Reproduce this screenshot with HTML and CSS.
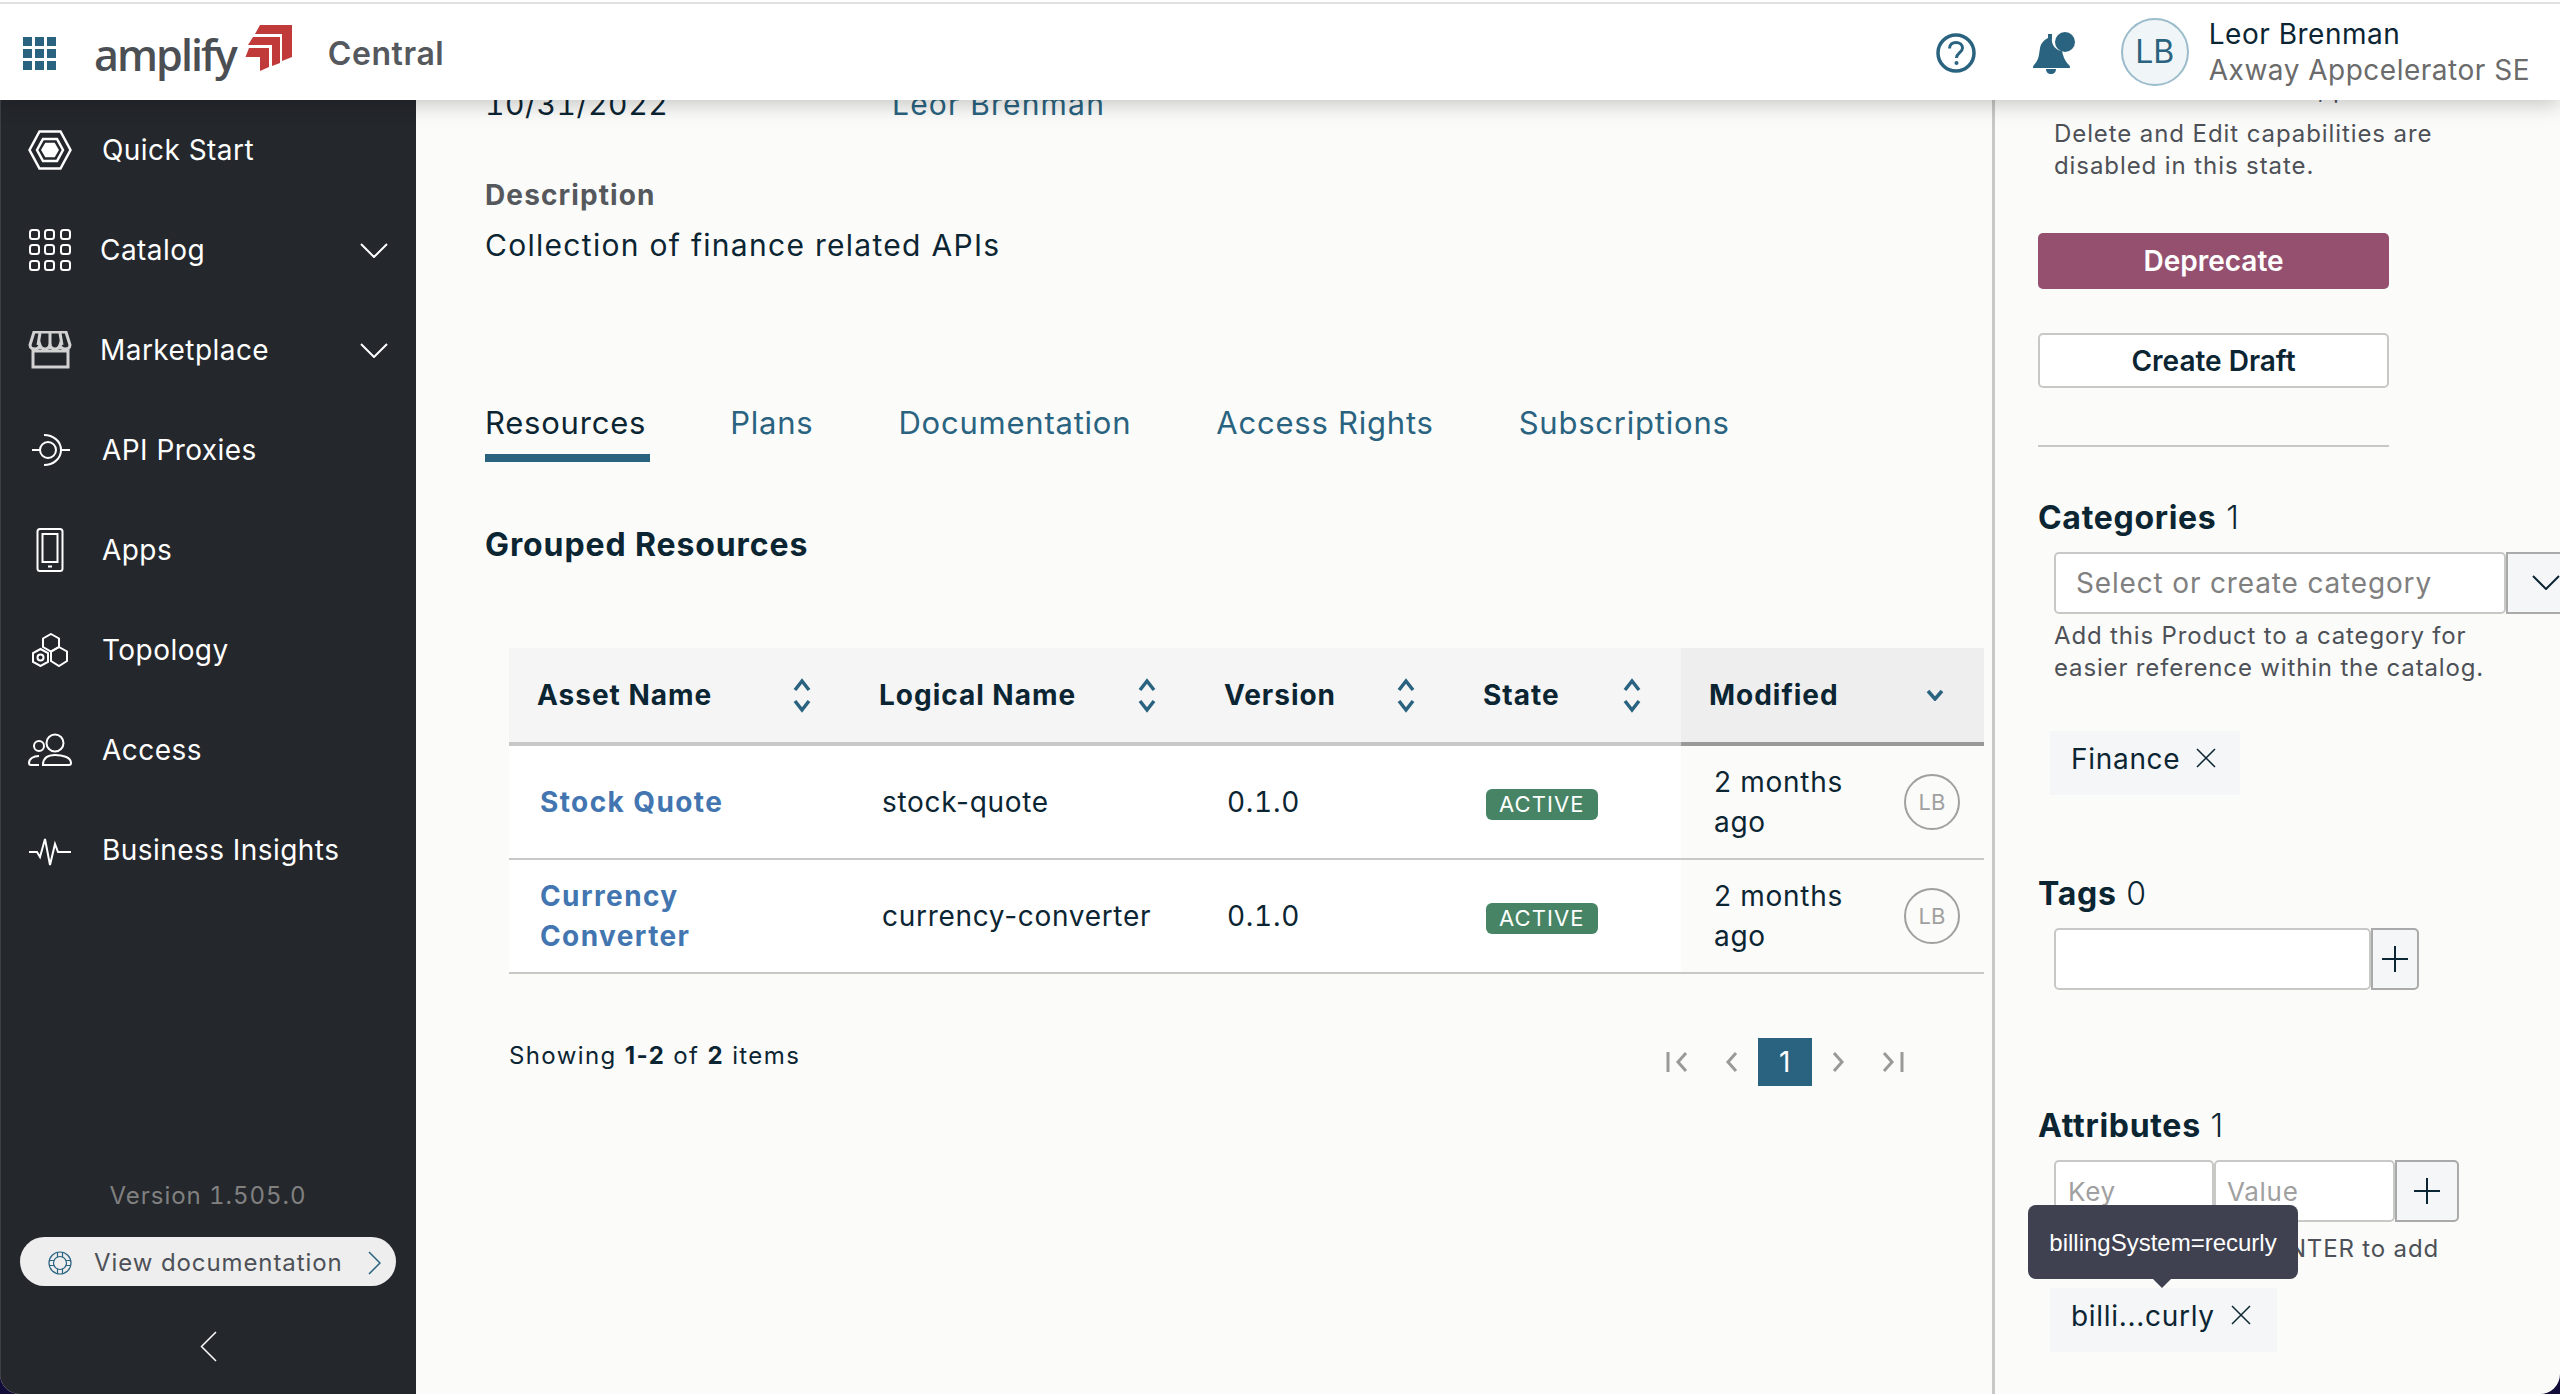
FILE: index.html
```html
<!DOCTYPE html>
<html lang="en">
<head>
    <meta charset="UTF-8">
    <title>Amplify Central - Product</title>
    <link rel="stylesheet" href="styles.css">
</head>
<body>
<div class="frame">
<div class="window">
    <header class="topbar">
        <svg class="apps-grid" viewBox="0 0 33 33"><rect width="9" height="9"/><rect x="12" width="9" height="9"/><rect x="24" width="9" height="9"/><rect y="12" width="9" height="9"/><rect x="12" y="12" width="9" height="9"/><rect x="24" y="12" width="9" height="9"/><rect y="24" width="9" height="9"/><rect x="12" y="24" width="9" height="9"/><rect x="24" y="24" width="9" height="9"/></svg>
        <span class="brand">amplify</span>
        <svg class="brand-mark" viewBox="15 9 48 47"><polygon points="30,9 62,9 62,41 52,45 52,18 25,18"/><polygon points="23,21 50,21 50,47 42,50 42,29 18,29"/><polygon points="19,32 39,32 39,51 30,55 30,41 15.5,41"/></svg>
        <span class="product">Central</span>
        <div class="topbar-right">
            <svg class="help-icon" viewBox="0 0 40 40"><circle cx="20" cy="20" r="18" fill="none" stroke="#2a6380" stroke-width="3.5"/><path d="M13.5 15.5c0-4 3-6 6.5-6s6.500 2.200 6.500 5.500c0 4.500-6 5-6 10" fill="none" stroke="#2a6380" stroke-width="3"/><circle cx="20.500" cy="30" r="2" fill="#2a6380"/></svg>
            <svg class="bell-icon" viewBox="0 0 44 42"><path d="M16 2h4v4c-1 6 3 12 10 13 1 4 2 9 7 14 1 1 1 2 1 3H1c0-1 0-2 1-3 5-5 5-11 6-17 1-5 4-8 8-10z" fill="#2a6380"/><path d="M14 37h10c0 3-2 5-5 5s-5-2-5-5z" fill="#2a6380"/><circle cx="33" cy="10" r="10" fill="#2a6380"/></svg>
            <div class="user-badge">LB</div>
            <div class="user-info">
                <div class="user-name">Leor Brenman</div>
                <div class="user-org">Axway Appcelerator SE</div>
            </div>
        </div>
    </header>

    <div class="layout">
        <nav class="sidebar">
            <a class="nav-item">
                <svg class="nav-icon icon-hex" viewBox="0 0 44 40"><polygon points="1.500,20 11.500,1.500 32.500,1.500 42.500,20 32.500,38.500 11.500,38.500"/><polygon points="9,20 15,9 29,9 35,20 29,31 15,31"/><polygon class="solid" points="14.500,20 18,14 26,14 29.500,20 26,26 18,26"/></svg>
                <span>Quick Start</span>
            </a>
            <a class="nav-item nav-item-sub">
                <svg class="nav-icon" viewBox="0 0 44 42"><rect x="2" y="1" width="9" height="9" rx="2.500"/><rect x="17" y="1" width="9" height="9" rx="2.500"/><rect x="33" y="1" width="9" height="9" rx="2.500"/><rect x="2" y="16" width="9" height="9" rx="2.500"/><rect x="17" y="16" width="9" height="9" rx="2.500"/><rect x="33" y="16" width="9" height="9" rx="2.500"/><rect x="2" y="32" width="9" height="9" rx="2.500"/><rect x="17" y="32" width="9" height="9" rx="2.500"/><rect x="33" y="32" width="9" height="9" rx="2.500"/></svg>
                <span>Catalog</span>
                <svg class="nav-caret" viewBox="0 0 28 15"><path d="M1 1l13 13L27 1"/></svg>
            </a>
            <a class="nav-item nav-item-sub">
                <svg class="nav-icon store" viewBox="0 0 44 38"><path d="M6 1h32l4 13c0 3-3 4-5 4s-4-1-5-4c-1 3-3 4-5 4s-4-1-5-4c-1 3-3 4-5 4s-4-1-5-4c-1 3-3 4-5 4s-5-1-5-4z"/><path d="M12 2l-2 12M22 2v12M32 2l2 12"/><path d="M5 18v18h35V18M5 20h35"/></svg>
                <span>Marketplace</span>
                <svg class="nav-caret" viewBox="0 0 28 15"><path d="M1 1l13 13L27 1"/></svg>
            </a>
            <a class="nav-item">
                <svg class="nav-icon" viewBox="0 0 44 34"><circle cx="20" cy="17" r="8"/><path d="M4 17h8M16 2c9 0 17 6 17 15s-8 15-17 15M33 17h9"/></svg>
                <span>API Proxies</span>
            </a>
            <a class="nav-item">
                <svg class="nav-icon" viewBox="0 0 44 44"><rect x="9.500" y="1" width="25" height="42" rx="2.500"/><rect x="14.500" y="6" width="15" height="28"/><path d="M20 38.500h4"/></svg>
                <span>Apps</span>
            </a>
            <a class="nav-item">
                <svg class="nav-icon" viewBox="0 0 44 34"><polygon points="23,1 31,5.500 31,14 23,18.500 15,14 15,5.500"/><polygon points="31,14 39,18.500 39,28 31,33 23,28 23,18.500"/><polygon points="12.500,16 20,20 20,29 12.500,33 5,29 5,20"/><circle cx="12.500" cy="24.500" r="3"/></svg>
                <span>Topology</span>
            </a>
            <a class="nav-item">
                <svg class="nav-icon" viewBox="0 0 44 34"><circle cx="27" cy="10" r="8.500"/><circle cx="11" cy="13" r="5"/><path d="M15 32c0-8 5-10 12-10s16 2 16 8c0 1-1 2-2 2z"/><path d="M11 32H3c-1 0-2-1-2-2 0-4 4-7 10-7"/></svg>
                <span>Access</span>
            </a>
            <a class="nav-item">
                <svg class="nav-icon" viewBox="0 0 44 32"><path d="M1 18h8l3 5 5-18 5 26 5-21 3 8h13"/></svg>
                <span>Business Insights</span>
            </a>
            <div class="sidebar-foot">
                <div class="version">Version 1.505.0</div>
                <a class="doc-pill">
                    <svg class="buoy" viewBox="0 0 24 24"><circle cx="12" cy="12" r="11"/><circle cx="12" cy="12" r="6.500"/><path d="M9.500 1.500v5M14.500 1.500v5M9.500 17.500v5M14.500 17.500v5M1.500 9.500h5M1.500 14.500h5M17.500 9.500h5M17.500 14.500h5"/></svg>
                    <span>View documentation</span>
                    <svg class="pill-caret" viewBox="0 0 13 24"><path d="M1 1l11 11L1 23"/></svg>
                </a>
                <svg class="collapse" viewBox="0 0 17 31"><path d="M16 1L1.500 15.500 16 30"/></svg>
            </div>
        </nav>

        <main class="content">
            <div class="meta-row">
                <span class="meta-date">10/31/2022</span>
                <a class="meta-owner">Leor Brenman</a>
            </div>
            <div class="field-label">Description</div>
            <div class="field-value">Collection of finance related APIs</div>

            <div class="tabs">
                <a class="tab tab-active">Resources</a>
                <a class="tab">Plans</a>
                <a class="tab">Documentation</a>
                <a class="tab">Access Rights</a>
                <a class="tab">Subscriptions</a>
            </div>

            <h2 class="section-title">Grouped Resources</h2>

            <table class="grid">
                <colgroup>
                    <col class="col-asset"><col class="col-logical"><col class="col-version"><col class="col-state"><col class="col-modified">
                </colgroup>
                <thead>
                    <tr>
                        <th><div class="th-in">Asset Name<svg class="sort" viewBox="0 0 18 35"><path d="M2 12l7-9 7 9M2 23l7 9 7-9"/></svg></div></th>
                        <th><div class="th-in">Logical Name<svg class="sort" viewBox="0 0 18 35"><path d="M2 12l7-9 7 9M2 23l7 9 7-9"/></svg></div></th>
                        <th><div class="th-in">Version<svg class="sort" viewBox="0 0 18 35"><path d="M2 12l7-9 7 9M2 23l7 9 7-9"/></svg></div></th>
                        <th><div class="th-in">State<svg class="sort" viewBox="0 0 18 35"><path d="M2 12l7-9 7 9M2 23l7 9 7-9"/></svg></div></th>
                        <th class="sorted"><div class="th-in">Modified<svg class="sort-one" viewBox="0 0 18 12"><path d="M2 2l7 8 7-8"/></svg></div></th>
                    </tr>
                </thead>
                <tbody>
                    <tr>
                        <td><a class="asset-link">Stock Quote</a></td>
                        <td>stock-quote</td>
                        <td class="num">0.1.0</td>
                        <td><span class="badge">ACTIVE</span></td>
                        <td class="sorted"><div class="when"><span class="when-text">2 months ago</span><span class="owner-dot">LB</span></div></td>
                    </tr>
                    <tr>
                        <td><a class="asset-link">Currency<br>Converter</a></td>
                        <td>currency-converter</td>
                        <td class="num">0.1.0</td>
                        <td><span class="badge">ACTIVE</span></td>
                        <td class="sorted"><div class="when"><span class="when-text">2 months ago</span><span class="owner-dot">LB</span></div></td>
                    </tr>
                </tbody>
            </table>

            <div class="table-foot">
                <div class="showing">Showing <b>1-2</b> of <b>2</b> items</div>
                <div class="pager">
                    <svg class="pg" viewBox="0 0 24 22"><path d="M2 1v20M20 2l-8 9 8 9"/></svg>
                    <svg class="pg pg-prev" viewBox="0 0 14 22"><path d="M12 2l-8 9 8 9"/></svg>
                    <span class="pg-current">1</span>
                    <svg class="pg pg-next" viewBox="0 0 14 22"><path d="M2 2l8 9-8 9"/></svg>
                    <svg class="pg pg-last" viewBox="0 0 24 22"><path d="M22 1v20M4 2l8 9-8 9"/></svg>
                </div>
            </div>
        </main>

        <aside class="panel">
            <p class="panel-note panel-note-top">This Product is active, published.</p>
            <p class="panel-note">Delete and Edit capabilities are<br>disabled in this state.</p>
            <button class="btn btn-danger">Deprecate</button>
            <button class="btn btn-plain">Create Draft</button>
            <hr class="panel-rule">

            <h3 class="panel-head head-categories"><b>Categories</b> 1</h3>
            <div class="select-row">
                <div class="input-box input-select">Select or create category</div>
                <div class="select-btn"><svg viewBox="0 0 28 15"><path d="M1 1l13 13L27 1"/></svg></div>
            </div>
            <p class="hint hint-categories">Add this Product to a category for<br>easier reference within the catalog.</p>
            <div class="chip chip-finance">Finance<svg class="chip-x" viewBox="0 0 20 20"><path d="M1 1l18 18M19 1L1 19"/></svg></div>

            <h3 class="panel-head head-tags"><b>Tags</b> 0</h3>
            <div class="add-row">
                <div class="input-box input-tag"></div>
                <div class="add-btn add-tag"><svg viewBox="0 0 26 26"><path d="M13 0v26M0 13h26"/></svg></div>
            </div>

            <h3 class="panel-head head-attrs"><b>Attributes</b> 1</h3>
            <div class="add-row">
                <div class="input-box input-key">Key</div>
                <div class="input-box input-value">Value</div>
                <div class="add-btn add-attr"><svg viewBox="0 0 26 26"><path d="M13 0v26M0 13h26"/></svg></div>
            </div>
            <p class="hint hint-attrs">Type and press ENTER to add</p>
            <div class="chip chip-attr">billi...curly<svg class="chip-x" viewBox="0 0 20 20"><path d="M1 1l18 18M19 1L1 19"/></svg>
                <div class="tooltip">billingSystem=recurly</div>
            </div>
        </aside>
    </div>
</div>
</div>
</body>
</html>
```

FILE: styles.css
```css
* {
    box-sizing: border-box;
}
html, body {
    margin: 0;
    padding: 0;
    background: #fff;
    overflow: hidden;
}
body {
    width: 2560px;
    height: 1396px;
    font-family: Inter, "Liberation Sans", sans-serif;
    font-size: 28px;
    letter-spacing: 0.025em;
    color: #0c2533;
}
svg {
    display: block;
    flex: none;
}

/* outer window, the corners show the desktop behind it */
.frame {
    height: 1394px;
    background: #120c38;
}
.window {
    height: 1394px;
    display: flex;
    flex-direction: column;
    overflow: hidden;
    background: #fbfbf9;
    border-radius: 0 0 20px 20px;
}

/* top bar */
.topbar {
    height: 100px;
    flex: none;
    display: flex;
    align-items: center;
    padding-left: 23px;
    background: #fff;
    border-top: 3px solid #fff;
    box-shadow: 0 4px 20px rgba(0, 0, 0, 0.22);
    position: relative;
    z-index: 5;
}
.topbar::before {
    content: "";
    position: absolute;
    left: 0;
    right: 0;
    top: -1px;
    height: 2px;
    background: #e0e0e0;
}
.apps-grid {
    width: 33px;
    height: 33px;
    fill: #2a6380;
    margin-top: 3px;
}
.brand {
    font-family: "Open Sans", sans-serif;
    font-weight: 600;
    font-size: 43px;
    letter-spacing: -0.045em;
    color: #4b4f54;
    margin-left: 38px;
    margin-top: 6px;
}
.brand-mark {
    width: 48px;
    height: 47px;
    fill: #c03a3a;
    margin-left: 9px;
    margin-top: -7px;
}
.product {
    font-size: 32px;
    font-weight: 600;
    letter-spacing: 0.018em;
    color: #55585d;
    margin-left: 35px;
    margin-top: 3px;
}
.topbar-right {
    margin-left: auto;
    display: flex;
    align-items: center;
    padding-right: 30px;
    letter-spacing: 0.018em;
}
.help-icon {
    width: 40px;
    height: 40px;
    margin-top: 3px;
}
.bell-icon {
    width: 44px;
    height: 42px;
    margin-left: 56px;
    margin-top: 2px;
}
.user-badge {
    width: 68px;
    height: 68px;
    margin-left: 45px;
    border-radius: 50%;
    background: #f0f5f7;
    border: 2px solid #9bbccb;
    color: #2a6380;
    font-size: 32px;
    letter-spacing: 0;
    display: flex;
    align-items: center;
    justify-content: center;
}
.user-info {
    margin-left: 20px;
    line-height: 36px;
}
.user-org {
    color: #6b6b6b;
}

.layout {
    flex: 1;
    min-height: 0;
    display: flex;
}

/* sidebar */
.sidebar {
    width: 416px;
    flex: none;
    display: flex;
    flex-direction: column;
    background: #24272c;
    box-shadow: inset 1px 0 0 #3c3f44;
    color: #fff;
    letter-spacing: 0.016em;
}
.nav-item {
    height: 100px;
    flex: none;
    display: flex;
    align-items: center;
    gap: 30px;
    padding-left: 28px;
}
.nav-item-sub {
    gap: 28px;
}
.nav-icon {
    width: 44px;
    height: auto;
    fill: none;
    stroke: #fff;
    stroke-width: 2;
}
.nav-icon .solid {
    fill: #fff;
}
.icon-hex {
    stroke-width: 2.5;
}
.nav-icon.store {
    stroke: #d2d2d2;
    stroke-width: 3;
}
.nav-caret {
    width: 28px;
    height: 15px;
    margin-left: auto;
    margin-right: 28px;
    fill: none;
    stroke: #fff;
    stroke-width: 2;
}
.sidebar-foot {
    margin-top: auto;
    display: flex;
    flex-direction: column;
    align-items: center;
    padding-bottom: 32px;
}
.version {
    font-size: 24px;
    font-variant-numeric: tabular-nums;
    line-height: 32px;
    letter-spacing: 0.04em;
    color: #808080;
}
.doc-pill {
    width: 376px;
    height: 49px;
    margin-top: 25px;
    display: flex;
    align-items: center;
    padding: 2px 0 0 28px;
    background: #eee;
    border-radius: 25px;
    color: #4d5157;
    font-size: 24px;
    letter-spacing: 0.038em;
}
.doc-pill span {
    margin-left: 22px;
}
.buoy {
    width: 24px;
    height: 24px;
    fill: none;
    stroke: #2a6380;
    stroke-width: 1.2;
}
.pill-caret {
    width: 13px;
    height: 24px;
    margin-left: auto;
    margin-right: 15px;
    fill: none;
    stroke: #2a6380;
    stroke-width: 1.5;
}
.collapse {
    width: 17px;
    height: 31px;
    margin-top: 45px;
    fill: none;
    stroke: #fff;
    stroke-width: 1.5;
}

/* middle column */
.content {
    flex: 1;
    min-width: 0;
    padding-left: 69px;
    overflow: hidden;
}
.meta-row {
    display: flex;
    font-size: 30px;
    letter-spacing: 0.04em;
    line-height: 40px;
    margin-top: -16px;
}
.meta-date {
    width: 407px;
    font-variant-numeric: tabular-nums;
    letter-spacing: 0.02em;
}
.meta-owner {
    color: #2a6380;
}
.field-label {
    margin-top: 53px;
    line-height: 36px;
    font-weight: 700;
    letter-spacing: 0.04em;
    color: #55585d;
}
.field-value {
    margin-top: 12px;
    line-height: 40px;
    font-size: 30px;
    letter-spacing: 0.043em;
}
.tabs {
    display: flex;
    margin-top: 138px;
}
.tab {
    font-size: 31px;
    line-height: 40px;
    letter-spacing: 0.025em;
    padding-bottom: 19px;
    margin-right: 85px;
    color: #2a6380;
}
.tab-active {
    color: #0c2533;
    padding-bottom: 11px;
    padding-right: 4px;
    margin-right: 80px;
    border-bottom: 8px solid #2a6380;
}
.section-title {
    margin: 61px 0 0;
    font-size: 32px;
    line-height: 44px;
    letter-spacing: 0.028em;
    font-weight: 700;
}

/* table */
.grid {
    margin: 81px 0 0 24px;
    width: 1475px;
    table-layout: fixed;
    border-collapse: separate;
    border-spacing: 0;
}
.col-asset { width: 342px; }
.col-logical { width: 345px; }
.col-version { width: 259px; }
.col-state { width: 226px; }
.col-modified { width: 303px; }
.grid th {
    height: 98px;
    padding: 0 40px 0 28px;
    background: #f5f5f5;
    border-bottom: 4px solid #c8c8c6;
    text-align: left;
    font-weight: 700;
    letter-spacing: 0.035em;
}
.grid th.sorted {
    background: #eee;
    border-bottom-color: #999;
}
.th-in {
    display: flex;
    align-items: center;
    justify-content: space-between;
}
.sort {
    width: 18px;
    height: 35px;
    fill: none;
    stroke: #2a6380;
    stroke-width: 3.5;
}
.sort-one {
    width: 18px;
    height: 12px;
    fill: none;
    stroke: #2a6380;
    stroke-width: 3.5;
}
.grid td {
    height: 114px;
    padding: 0 0 0 31px;
    background: #fff;
    border-bottom: 2px solid #c8c8c6;
    line-height: 40px;
}
.grid td.num {
    font-variant-numeric: tabular-nums;
}
.grid td.sorted {
    background: #fbfbf9;
    padding: 0 24px 0 33px;
}
.asset-link {
    color: #4376b0;
    font-weight: 700;
    letter-spacing: 0.05em;
}
.badge {
    display: inline-block;
    height: 31px;
    line-height: 31px;
    padding: 0 13px;
    border-radius: 6px;
    background: #468465;
    color: #fff;
    font-size: 22px;
    letter-spacing: 0.05em;
    vertical-align: middle;
}
.when {
    display: flex;
    align-items: center;
    justify-content: space-between;
}
.when-text {
    width: 150px;
}
.owner-dot {
    width: 56px;
    height: 56px;
    border: 2px solid #a0a0a0;
    border-radius: 50%;
    color: #a0a0a0;
    font-size: 22px;
    letter-spacing: 0;
    display: flex;
    align-items: center;
    justify-content: center;
}

.table-foot {
    margin: 64px 0 0 24px;
    width: 1475px;
    display: flex;
    justify-content: space-between;
    align-items: flex-start;
    padding-right: 80px;
}
.showing {
    font-size: 24px;
    line-height: 36px;
    letter-spacing: 0.058em;
}
.pager {
    display: flex;
    align-items: center;
    height: 48px;
}
.pg {
    width: 24px;
    height: 22px;
    fill: none;
    stroke: #999;
    stroke-width: 3;
}
.pg-prev, .pg-next {
    width: 14px;
}
.pg-prev {
    margin: 0 20px 0 34px;
}
.pg-next {
    margin: 0 34px 0 20px;
}
.pg-current {
    width: 54px;
    height: 48px;
    background: #2a6380;
    color: #fff;
    text-align: center;
    line-height: 48px;
}

/* right panel */
.panel {
    width: 568px;
    flex: none;
    border-left: 3px solid #c8c8c6;
    padding-left: 43px;
    overflow: hidden;
}
.panel-note {
    margin: 0 0 0 16px;
    white-space: nowrap;
    font-size: 24px;
    line-height: 32px;
    letter-spacing: 0.038em;
    color: #4d5157;
}
.panel-note-top {
    margin-top: -26px;
    margin-bottom: 12px;
}
.btn {
    display: block;
    width: 351px;
    font-family: inherit;
    font-size: 28px;
    letter-spacing: 0;
    font-weight: 600;
    border-radius: 5px;
}
.btn-danger {
    height: 56px;
    margin-top: 51px;
    border: 0;
    background: #955070;
    color: #fff;
}
.btn-plain {
    height: 55px;
    margin-top: 44px;
    border: 2px solid #c8c8c6;
    background: #fff;
    color: #0c2533;
}
.panel-rule {
    width: 351px;
    height: 2px;
    margin: 57px 0 0;
    border: 0;
    background: #c8c8c6;
}
.panel-head {
    margin: 0;
    font-size: 32px;
    line-height: 40px;
    font-weight: 300;
}
.panel-head b {
    font-weight: 700;
}
.head-categories { margin-top: 51px; }
.head-tags { margin-top: 79px; }
.head-attrs { margin-top: 116px; }

.input-box {
    height: 62px;
    background: #fff;
    border: 2px solid #c8c8c6;
    border-radius: 5px;
    line-height: 58px;
    white-space: nowrap;
    overflow: hidden;
}
.select-row {
    display: flex;
    margin: 14px 0 0 16px;
    width: 520px;
}
.input-select {
    width: 452px;
    padding-left: 20px;
    color: #808080;
    letter-spacing: 0.03em;
    flex: none;
}
.select-btn {
    width: 68px;
    height: 62px;
    flex: none;
    background: #f5f6f7;
    border: 2px solid #aaa;
    padding: 21px 0 0 24px;
}
.select-btn svg {
    width: 28px;
    height: 15px;
    fill: none;
    stroke: #0c2533;
    stroke-width: 2;
}
.hint {
    margin: 0 0 0 16px;
    font-size: 24px;
    line-height: 32px;
    letter-spacing: 0.035em;
    color: #4d5157;
    white-space: nowrap;
}
.hint-categories {
    margin-top: 6px;
}
.hint-attrs {
    margin-top: 11px;
    width: 385px;
    text-align: right;
}
.chip {
    display: flex;
    align-items: center;
    height: 64px;
    margin-left: 12px;
    padding: 0 0 8px 21px;
    background: #f5f6f7;
    position: relative;
}
.chip-finance {
    width: 190px;
    margin-top: 47px;
}
.chip-attr {
    width: 227px;
    margin-top: 23px;
}
.chip-x {
    width: 20px;
    height: 20px;
    margin-left: 16px;
    margin-top: -2px;
    fill: none;
    stroke: #0c2533;
    stroke-width: 1.5;
}
.add-row {
    display: flex;
    margin: 14px 0 0 16px;
}
.add-btn {
    height: 62px;
    background: #f5f6f7;
    border: 2px solid #aaa;
    border-radius: 0 5px 5px 0;
    display: flex;
    align-items: center;
    justify-content: center;
}
.add-btn svg {
    width: 26px;
    height: 26px;
    fill: none;
    stroke: #0c2533;
    stroke-width: 2;
}
.input-tag { width: 317px; }
.add-tag { width: 48px; }
.input-key {
    width: 160px;
    padding-left: 12px;
    color: #a0a0a0;
    font-size: 26px;
    line-height: 60px;
}
.input-value {
    width: 181px;
    padding-left: 11px;
    color: #a0a0a0;
    font-size: 26px;
    line-height: 60px;
}
.add-attr { width: 64px; }

.tooltip {
    position: absolute;
    left: -22px;
    top: -83px;
    width: 270px;
    height: 74px;
    background: #3f4150;
    color: #fff;
    border-radius: 8px;
    font-family: "Liberation Sans", sans-serif;
    font-size: 24px;
    letter-spacing: 0;
    line-height: 76px;
    text-align: center;
}
.tooltip::after {
    content: "";
    position: absolute;
    left: 125px;
    bottom: -9px;
    border-left: 9px solid transparent;
    border-right: 9px solid transparent;
    border-top: 9px solid #3f4150;
}
```
